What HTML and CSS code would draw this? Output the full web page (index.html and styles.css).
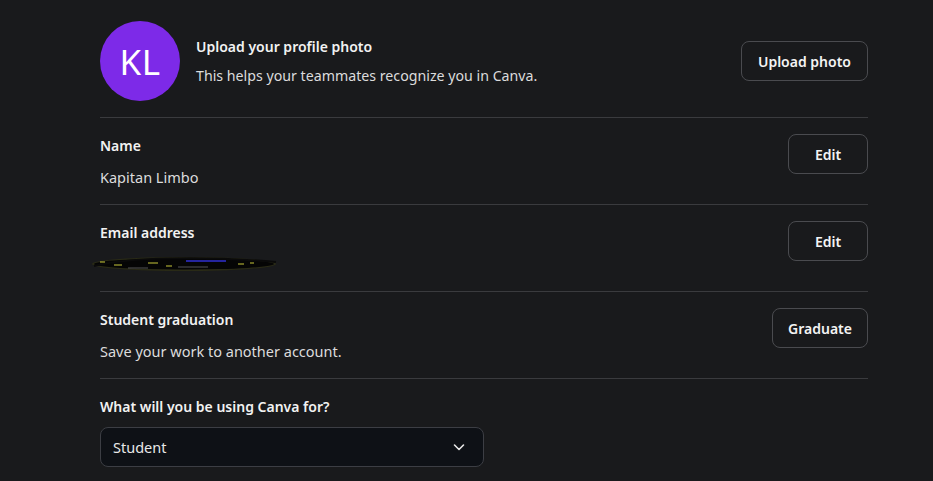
FILE: index.html
```html
<!DOCTYPE html>
<html lang="en">
<head>
    <meta charset="UTF-8">
    <title>Your account</title>
    <link rel="stylesheet" href="styles.css">
</head>
<body>
    <div class="account">
        <div class="row photo-row">
            <div class="avatar">KL</div>
            <div class="photo-text">
                <div class="label">Upload your profile photo</div>
                <div class="value">This helps your teammates recognize you in Canva.</div>
            </div>
            <button class="btn">Upload photo</button>
        </div>

        <div class="row">
            <div class="field">
                <div class="label">Name</div>
                <div class="value">Kapitan Limbo</div>
            </div>
            <button class="btn">Edit</button>
        </div>

        <div class="row">
            <div class="field">
                <div class="label">Email address</div>
                <div class="value scribble-wrap">
                    <svg class="scribble" width="192" height="22" viewBox="0 0 192 22">
                        <ellipse cx="96" cy="11" rx="92" ry="7" fill="#3a3a10" opacity="0.5"/>
                        <ellipse cx="96" cy="11" rx="90" ry="5.5" fill="#050505"/>
                        <path d="M6 13 C40 4, 120 3, 188 9" stroke="#0a0a0a" stroke-width="2" fill="none"/>
                        <path d="M12 9 h5 M26 12 h8 M60 10 h10 M78 13 h6 M150 11 h6 M162 10 h4" stroke="#c8c83a" stroke-width="1.2"/>
                        <path d="M98 8 h40" stroke="#3030d0" stroke-width="1.5"/>
                        <path d="M40 15 h20 M90 14 h30" stroke="#555" stroke-width="1"/>
                    </svg>
                </div>
            </div>
            <button class="btn">Edit</button>
        </div>

        <div class="row">
            <div class="field">
                <div class="label">Student graduation</div>
                <div class="value">Save your work to another account.</div>
            </div>
            <button class="btn">Graduate</button>
        </div>

        <div class="row last">
            <div class="field">
                <div class="label">What will you be using Canva for?</div>
                <div class="select">
                    <span>Student</span>
                    <svg width="14" height="14" viewBox="0 0 14 14">
                        <path d="M2.5 5 L7 9.5 L11.5 5" stroke="#e8e8e8" stroke-width="1.6" fill="none" stroke-linecap="round" stroke-linejoin="round"/>
                    </svg>
                </div>
            </div>
        </div>
    </div>
</body>
</html>
```

FILE: styles.css
```css
body {
    margin: 0;
    background-color: #191a1c;
    font-family: 'Noto Sans', 'Open Sans', sans-serif;
    color: #e6e6e6;
}
.account {
    width: 768px;
    margin-left: 100px;
}
.row {
    display: flex;
    justify-content: space-between;
    align-items: flex-start;
    padding: 17px 0 16px;
    border-bottom: 1px solid #3a3b3e;
}
.row.last {
    border-bottom: none;
}
.photo-row {
    align-items: center;
    padding: 21px 0 16px;
}
.avatar {
    width: 80px;
    height: 80px;
    border-radius: 50%;
    background: #7d2ae8;
    color: white;
    font-size: 35px;
    display: flex;
    align-items: center;
    justify-content: center;
    letter-spacing: 0.5px;
}
.photo-text {
    flex: 1;
    margin-left: 16px;
    display: flex;
    flex-direction: column;
    gap: 7px;
}
.photo-text .value {
    font-size: 14.2px;
}
.field {
    display: flex;
    flex-direction: column;
    gap: 9px;
}
.label {
    font-size: 14px;
    font-weight: 600;
    line-height: 22px;
    color: #f2f2f2;
}
.value {
    font-size: 14.5px;
    line-height: 22px;
    color: #dcdcdc;
}
.scribble-wrap {
    height: 22px;
}
.scribble {
    margin-left: -12px;
    display: block;
}
.btn {
    background: transparent;
    color: #f4f4f4;
    font-family: inherit;
    font-size: 14px;
    font-weight: 600;
    height: 40px;
    padding: 0 15px;
    border: 1px solid #4a4b4f;
    border-radius: 8px;
    cursor: pointer;
}
.row .btn {
    margin-top: -1px;
    min-width: 80px;
}
.photo-row .btn {
    margin-top: 0;
    padding: 0 16px;
}
.select {
    width: 384px;
    height: 40px;
    box-sizing: border-box;
    border: 1px solid #3c3e44;
    border-radius: 8px;
    background: #0e1116;
    display: flex;
    align-items: center;
    justify-content: space-between;
    padding: 0 17px 0 12px;
    font-size: 14.5px;
    color: #e8e8e8;
}
.select svg {
    display: block;
}
```
